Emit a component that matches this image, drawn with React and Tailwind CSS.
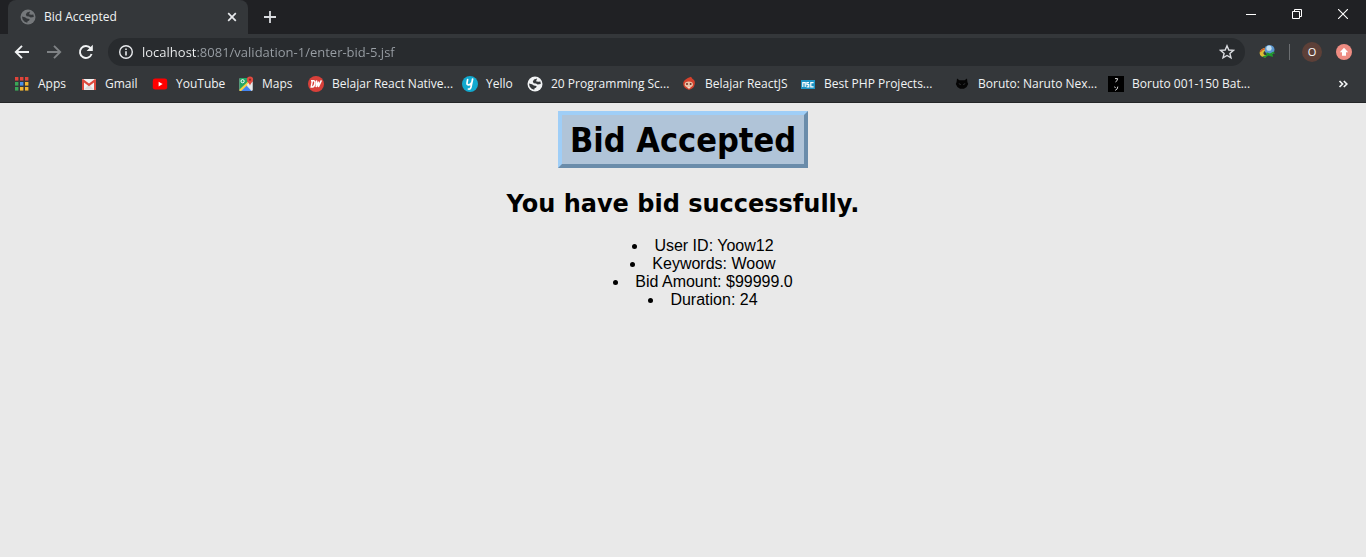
import React from "react";

function GlobeIcon({ disc, land }) {
  return (
    <svg viewBox="0 0 16 16" className="size-4 shrink-0" aria-hidden="true">
      <circle cx="8" cy="8" r="7.5" fill={disc} />
      <path d="M10.2 2.6 L7 3.4 L5.8 5.4 L6.6 7.2 L9 7.6 L10.6 8.4 L13.8 8 L13.4 5.6 L11.2 5.8 L9 5.2 Z M2 7.6 L5 8.2 L6.8 9.4 L9.6 10 L9.2 11.6 L7.6 12.2 L7.2 13.8 L4.6 12.8 L2.6 10.6 Z" fill={land} />
    </svg>
  );
}

const dotColors = ["#e0443a", "#e0443a", "#e0443a", "#3aa757", "#4a90e8", "#f2b632", "#3aa757", "#f2b632", "#f2b632"];

function AppsIcon() {
  return (
    <svg viewBox="0 0 16 16" className="size-4 shrink-0" aria-hidden="true">
      {dotColors.map((c, i) => (
        <rect key={i} x={1 + (i % 3) * 5} y={1 + Math.floor(i / 3) * 5} width="3.4" height="3.6" fill={c} />
      ))}
    </svg>
  );
}

function GmailIcon() {
  return (
    <svg viewBox="0 0 16 16" className="size-4 shrink-0" aria-hidden="true">
      <rect x="1" y="3" width="14" height="11" rx="1" fill="#f2f2f2" />
      <path d="M3 13.5 L8 8.5 L13 13.5 Z" fill="#dcdcdc" />
      <path d="M1 14 V4 Q1 3 2 3 L8 7.6 L14 3 Q15 3 15 4 V14 H13 V6.4 L8 10.2 L3 6.4 V14 Z" fill="#dc4a3d" />
    </svg>
  );
}

function YouTubeIcon() {
  return (
    <svg viewBox="0 0 16 16" className="size-4 shrink-0" aria-hidden="true">
      <rect x="0.8" y="2.6" width="14.4" height="11" rx="2.4" fill="#f00" />
      <path d="M6.6 5.8 L10.6 8.1 L6.6 10.4 Z" fill="#fff" />
    </svg>
  );
}

function MapsIcon() {
  return (
    <svg viewBox="0 0 16 16" className="size-4 shrink-0" aria-hidden="true">
      <rect x="1.5" y="2" width="13" height="13" rx="1" fill="#dfe3e5" />
      <path d="M2 2 H10 L12 7 L2.5 14.5 H1.5 V3 Z" fill="#23a566" />
      <path d="M1.5 13.5 L11.5 4 L13.5 6 L4 15 H1.5 Z" fill="#f7cf45" />
      <path d="M3.2 15 L8.6 9.7 L13.6 15 Z" fill="#4384f3" />
      <path d="M8.6 8.8 L14.5 14.6 V6 L12 6 Z" fill="#e8eaeb" />
      <circle cx="4.6" cy="5.2" r="1.6" fill="none" stroke="#fff" strokeWidth="1" />
      <path d="M12 0.6 A3.1 3.1 0 0 1 15.1 3.7 C15.1 6 12.6 6.8 12 9.8 C11.4 6.8 8.9 6 8.9 3.7 A3.1 3.1 0 0 1 12 0.6 Z" fill="#e04a3f" />
      <circle cx="12" cy="3.7" r="1.1" fill="#8c2a22" />
    </svg>
  );
}

function DwIcon() {
  return (
    <svg viewBox="0 0 16 16" className="size-4 shrink-0" aria-hidden="true">
      <circle cx="8" cy="8" r="8" fill="#d8403a" />
      <path d="M3 4.8 H5.8 Q7.2 5 6.8 7.4 Q6.4 11 4.4 11 H3.2 L4.3 5.2 M8.6 4.4 L8.2 11 L10.6 5.6 L10.4 11 L13.4 4.4" fill="none" stroke="#fff" strokeWidth="1.4" />
    </svg>
  );
}

function YelloIcon() {
  return (
    <svg viewBox="0 0 16 16" className="size-4 shrink-0" aria-hidden="true">
      <circle cx="8" cy="8" r="8" fill="#12a9cf" />
      <path d="M5.6 3.6 L5 7 Q4.8 8.8 6.6 8.8 Q8.6 8.6 9.4 7 M10.6 3 L9 11 Q8.4 13.6 6.4 13" fill="none" stroke="#fff" strokeWidth="1.7" strokeLinecap="round" />
    </svg>
  );
}

function FaceIcon() {
  return (
    <svg viewBox="0 0 16 16" className="size-4 shrink-0" aria-hidden="true">
      <path d="M10 0.8 L11.4 2.8 Q14.4 4.4 13.8 8 Q13.4 11 11 12.6 L8 14 L5 12.6 Q2 10.6 2.2 7 Q3 3 10 0.8 Z" fill="#d6412c" />
      <ellipse cx="7.8" cy="8.4" rx="4.1" ry="2.8" fill="#e9c1a6" />
      <circle cx="6" cy="8" r="1" fill="#6b2c22" />
      <circle cx="9.6" cy="8" r="1" fill="#6b2c22" />
      <path d="M6 11 H9.8 L8 13 Z" fill="#f1ddd0" />
    </svg>
  );
}

function NscIcon() {
  return (
    <svg viewBox="0 0 16 16" className="size-4 shrink-0" aria-hidden="true">
      <rect x="1" y="4" width="14" height="9" fill="#1d93c4" />
      <path d="M2.8 11 V6.6 H5.2 V11 M9 6.6 H6.9 V8.7 H8.8 V10.8 H6.6 M13.6 6.6 H10.8 V10.8 H13.6" fill="none" stroke="#fff" strokeWidth="1.2" />
    </svg>
  );
}

function CatIcon() {
  return (
    <svg viewBox="0 0 16 16" className="size-4 shrink-0" aria-hidden="true">
      <path d="M3 2.6 L5.4 4.2 H10.6 L13 2.6 L13.4 6 L14.2 8 L12.6 11 L10 12.8 H6 L3.4 11 L1.8 8 L2.6 6 Z" fill="#050505" />
      <path d="M4.8 7.6 L6.8 8.6 M11.2 7.6 L9.2 8.6" stroke="#34373a" strokeWidth="0.9" />
    </svg>
  );
}

function KanaIcon() {
  return (
    <svg viewBox="0 0 16 16" className="size-4 shrink-0" aria-hidden="true">
      <rect width="16" height="16" fill="#000" />
      <path d="M7 2.6 L9.6 2.6 Q9.6 5 7.4 6 M6.6 10.6 L7.4 12 M9.8 10.6 Q9.8 13.4 7.2 14.4" fill="none" stroke="#d8d8d8" strokeWidth="1" />
    </svg>
  );
}

const bookmarks = [
  { label: "Apps", icon: <AppsIcon />, width: "w-[67px]" },
  { label: "Gmail", icon: <GmailIcon />, width: "w-[71px]" },
  { label: "YouTube", icon: <YouTubeIcon />, width: "w-[86px]" },
  { label: "Maps", icon: <MapsIcon />, width: "w-[70px]" },
  { label: "Belajar React Native...", icon: <DwIcon />, width: "w-[154px]" },
  { label: "Yello", icon: <YelloIcon />, width: "w-[65px]" },
  { label: "20 Programming Sc...", icon: <GlobeIcon disc="#f1f3f4" land="#34373a" />, width: "w-[154px]" },
  { label: "Belajar ReactJS", icon: <FaceIcon />, width: "w-[119px]" },
  { label: "Best PHP Projects...", icon: <NscIcon />, width: "w-[154px]" },
  { label: "Boruto: Naruto Nex...", icon: <CatIcon />, width: "w-[154px]" },
  { label: "Boruto 001-150 Bat...", icon: <KanaIcon />, width: "w-[154px]" },
];

const bid = [
  ["User ID", "Yoow12"],
  ["Keywords", "Woow"],
  ["Bid Amount", "$99999.0"],
  ["Duration", "24"],
];

function TabStrip() {
  return (
    <div className="flex h-[34px] bg-[#202124] pl-2">
      <div className="flex w-60 items-center rounded-t-lg bg-[#34373a] pr-2 pl-3">
        <GlobeIcon disc="#75787b" land="#34373a" />
        <span className="ml-2 flex-1 text-[12px] text-[#f1f3f4]">Bid Accepted</span>
        <button type="button" aria-label="Close tab" className="flex size-4 items-center justify-center">
          <svg viewBox="0 0 16 16" className="size-4" aria-hidden="true">
            <path d="M4.2 4.2 L11.8 11.8 M11.8 4.2 L4.2 11.8" stroke="#e8eaed" strokeWidth="1.7" />
          </svg>
        </button>
      </div>
      <button type="button" aria-label="New tab" className="ml-3 flex w-5 items-center justify-center">
        <svg viewBox="0 0 16 16" className="size-4" aria-hidden="true">
          <path d="M8 2 V14 M2 8 H14" stroke="#dadce0" strokeWidth="1.8" />
        </svg>
      </button>
      <div className="ml-auto flex h-7">
        <button type="button" aria-label="Minimize" className="flex w-[46px] items-center justify-center">
          <svg viewBox="0 0 10 10" className="size-2.5" aria-hidden="true">
            <path d="M0 5.5 H10" stroke="#fff" />
          </svg>
        </button>
        <button type="button" aria-label="Restore" className="flex w-[46px] items-center justify-center">
          <svg viewBox="0 0 10 10" className="size-2.5" aria-hidden="true">
            <path d="M0.5 2.5 H7.5 V9.5 H0.5 Z M2.5 2.5 V0.5 H9.5 V7.5 H7.5" fill="none" stroke="#fff" />
          </svg>
        </button>
        <button type="button" aria-label="Close window" className="flex w-[46px] items-center justify-center">
          <svg viewBox="0 0 10 10" className="size-2.5" aria-hidden="true">
            <path d="M0 0 L10 10 M10 0 L0 10" stroke="#fff" strokeWidth="1.1" />
          </svg>
        </button>
      </div>
    </div>
  );
}

function Toolbar() {
  return (
    <div className="flex h-9 items-center bg-[#34373a] pr-3 pl-3">
      <div className="flex gap-3">
        <button type="button" aria-label="Back" className="flex size-5 items-center justify-center">
          <svg viewBox="0 0 16 16" className="size-4" aria-hidden="true">
            <path d="M15 8 H2 M8 1.8 L1.8 8 L8 14.2" fill="none" stroke="#f1f3f4" strokeWidth="1.9" />
          </svg>
        </button>
        <button type="button" aria-label="Forward" className="flex size-5 items-center justify-center">
          <svg viewBox="0 0 16 16" className="size-4" aria-hidden="true">
            <path d="M1 8 H14 M8 1.8 L14.2 8 L8 14.2" fill="none" stroke="#7f8285" strokeWidth="1.9" />
          </svg>
        </button>
        <button type="button" aria-label="Reload" className="flex size-5 items-center justify-center">
          <svg viewBox="0 0 16 16" className="size-4" aria-hidden="true">
            <path d="M13.6 10 A6 6 0 1 1 12.6 4.2" fill="none" stroke="#f1f3f4" strokeWidth="1.9" />
            <path d="M14.8 0.8 V7 H8.6 Z" fill="#f1f3f4" />
          </svg>
        </button>
      </div>
      <div className="ml-3 flex h-7 flex-1 items-center rounded-full bg-[#282b2e] pr-2.5 pl-2.5">
        <svg viewBox="0 0 16 16" className="size-4 shrink-0" aria-hidden="true">
          <circle cx="8" cy="8" r="6.3" fill="none" stroke="#e8eaed" strokeWidth="1.4" />
          <path d="M8 7.2 V11.6 M8 4.4 V6" stroke="#e8eaed" strokeWidth="1.6" />
        </svg>
        <input
          type="text"
          aria-label="Address"
          defaultValue="localhost:8081/validation-1/enter-bid-5.jsf"
          className="ml-2 h-7 min-w-0 flex-1 bg-[linear-gradient(90deg,#f1f3f4_54px,#9aa0a6_54px)] bg-clip-text text-[13px] text-transparent outline-none"
        />
        <button type="button" aria-label="Bookmark this page" className="flex size-4 items-center justify-center">
          <svg viewBox="0 0 16 16" className="size-4" aria-hidden="true">
            <path d="M8 1.8 L9.8 6 L14.4 6.4 L10.9 9.4 L12 13.9 L8 11.5 L4 13.9 L5.1 9.4 L1.6 6.4 L6.2 6 Z" fill="none" stroke="#dadce0" strokeWidth="1.4" />
          </svg>
        </button>
      </div>
      <button type="button" aria-label="Download manager" className="ml-3 flex size-5 items-center justify-center">
        <svg viewBox="0 0 16 16" className="size-4" aria-hidden="true">
          <path d="M7 3.4 Q0.8 4.4 0.6 9 Q1 13.4 6.4 13.4 L7.6 11 Q4.6 11.4 4.4 9.2 Q4.8 6.8 8 6.6 Z" fill="#dcbc34" />
          <path d="M1.2 8 Q2.4 5.4 6 4.6" fill="none" stroke="#d0552f" strokeWidth="1.2" />
          <circle cx="10.6" cy="5.8" r="4.9" fill="#5a96cf" />
          <circle cx="10" cy="4.2" r="2.6" fill="#c3dff0" />
          <path d="M7.6 8.2 L11 9.4 L14.6 7.4 L16 9.8 L13.4 9.6 L14 13 L9.4 11.4 L6 13.8 L3.4 12.6 L7.4 11 Z" fill="#1f9a2a" />
        </svg>
      </button>
      <span className="ml-3 h-4 w-px bg-[#6b6e71]" />
      <button type="button" aria-label="Profile" className="ml-3 flex size-5 items-center justify-center rounded-full bg-[#5d4038] text-[11px] text-white">
        O
      </button>
      <button type="button" aria-label="Update available" className="ml-3 flex size-5 items-center justify-center">
        <svg viewBox="0 0 16 16" className="size-4" aria-hidden="true">
          <circle cx="8" cy="8" r="8" fill="#ee8c82" />
          <path d="M8 3.8 L12.2 8.2 H10 V11.8 H6 V8.2 H3.8 Z" fill="#fff" />
        </svg>
      </button>
    </div>
  );
}

function BookmarkBar() {
  return (
    <nav aria-label="Bookmarks" className="flex h-[33px] items-center border-b border-[#242628] bg-[#34373a] pr-[15px] pb-1 pl-[14px]">
      {bookmarks.map((b) => (
        <a key={b.label} href="#" className={`flex shrink-0 items-center gap-2 whitespace-nowrap ${b.width}`}>
          {b.icon}
          <span>{b.label}</span>
        </a>
      ))}
      <button type="button" aria-label="More bookmarks" className="ml-auto flex size-4 items-center justify-center">
        <svg viewBox="0 0 16 16" className="size-4" aria-hidden="true">
          <path d="M4.5 5 L7.5 8 L4.5 11 M8.8 5 L11.8 8 L8.8 11" fill="none" stroke="#f1f3f4" strokeWidth="1.7" />
        </svg>
      </button>
    </nav>
  );
}

export default function App() {
  return (
    <div className="flex min-h-screen flex-col bg-[#e9e9e9]">
      <header className="font-['Open_Sans',sans-serif] text-[12px] text-[#f1f3f4]">
        <TabStrip />
        <Toolbar />
        <BookmarkBar />
      </header>
      <main className="flex flex-col items-center pt-2 font-['Liberation_Sans',sans-serif] text-black">
        <h1 className="border-4 border-t-[#9fcef7] border-r-[#6a8caa] border-b-[#6a8caa] border-l-[#9fcef7] bg-[#b0c4d8] px-2 pt-[6px] pb-1 font-['DejaVu_Sans_Condensed',sans-serif] text-[34px] leading-[39px] font-bold">
          Bid Accepted
        </h1>
        <h2 className="mt-[22px] font-['DejaVu_Sans',sans-serif] text-[24px] leading-[29px] font-bold">You have bid successfully.</h2>
        <ul className="mt-[18px] list-inside list-disc pl-10 text-center text-[16px] leading-[18px]">
          {bid.map(([name, value]) => (
            <li key={name}>
              {name}: {value}
            </li>
          ))}
        </ul>
      </main>
    </div>
  );
}
